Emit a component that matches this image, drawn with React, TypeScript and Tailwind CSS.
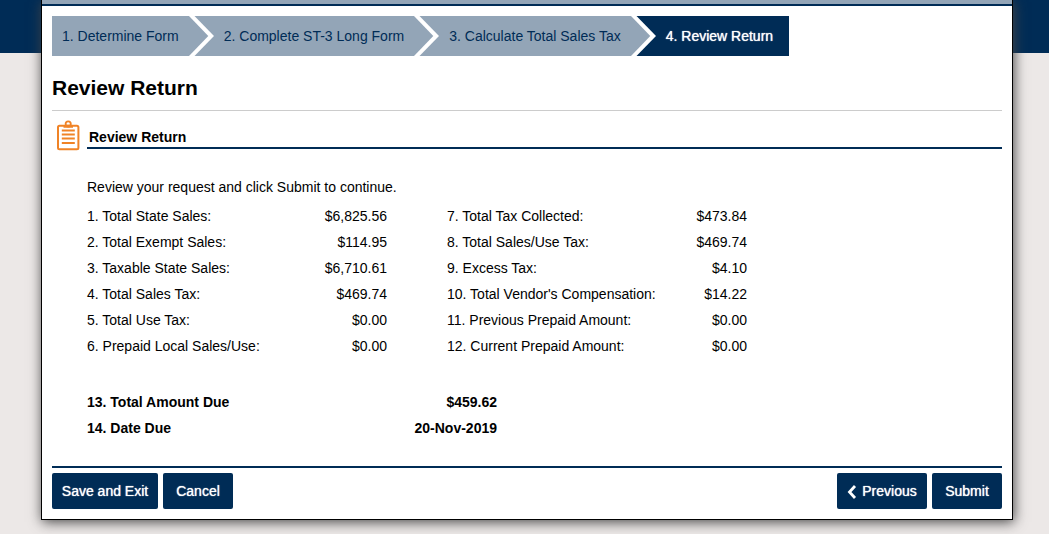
type Line = { label: string; value: string };

const steps = [
  "1. Determine Form",
  "2. Complete ST-3 Long Form",
  "3. Calculate Total Sales Tax",
  "4. Review Return",
];

const leftLines: Line[] = [
  { label: "1. Total State Sales:", value: "$6,825.56" },
  { label: "2. Total Exempt Sales:", value: "$114.95" },
  { label: "3. Taxable State Sales:", value: "$6,710.61" },
  { label: "4. Total Sales Tax:", value: "$469.74" },
  { label: "5. Total Use Tax:", value: "$0.00" },
  { label: "6. Prepaid Local Sales/Use:", value: "$0.00" },
];

const rightLines: Line[] = [
  { label: "7. Total Tax Collected:", value: "$473.84" },
  { label: "8. Total Sales/Use Tax:", value: "$469.74" },
  { label: "9. Excess Tax:", value: "$4.10" },
  { label: "10. Total Vendor's Compensation:", value: "$14.22" },
  { label: "11. Previous Prepaid Amount:", value: "$0.00" },
  { label: "12. Current Prepaid Amount:", value: "$0.00" },
];

const dueLines: Line[] = [
  { label: "13. Total Amount Due", value: "$459.62" },
  { label: "14. Date Due", value: "20-Nov-2019" },
];

const buttonClass =
  "flex h-9 items-center justify-center rounded-xs bg-[#002c56] text-white [text-shadow:0_0_1px_white] hover:cursor-pointer";

const StepArrow = ({ nextActive }: { nextActive: boolean }) => (
  <svg className="h-10 w-[25px]" viewBox="0 0 25 40" aria-hidden="true">
    <rect width="25" height="40" fill={nextActive ? "#002c56" : "#93a5b7"} />
    <path d="M0 0H5.5L25 20L5.5 40H0Z" fill="white" />
    <path d="M0 0L19.3 20L0 40Z" fill="#93a5b7" />
  </svg>
);

const ClipboardIcon = () => (
  <svg className="h-8 w-6" viewBox="0 0 24 32" fill="none" stroke="#f08326" aria-hidden="true">
    <rect x="2" y="6.7" width="20.4" height="23.5" rx="1.5" strokeWidth="2" />
    <circle cx="12.2" cy="4.9" r="2.6" strokeWidth="1.8" />
    <path d="M7.5 8.8V7Q8.5 5.8 10.5 5.8H14Q16 5.8 17 7V8.8Z" fill="#f08326" stroke="none" />
    <path d="M5.8 11.5H18.8M5.8 15.5H18.8M5.8 19.5H18.8M5.8 24H18.8" strokeWidth="1.9" />
  </svg>
);

const PreviousIcon = () => (
  <svg className="h-4 w-[10px]" viewBox="0 0 10 16" fill="none" aria-hidden="true">
    <path d="M8 3L2.5 9L8 15" stroke="white" strokeWidth="2.8" />
  </svg>
);

const LinesTable = ({ lines, className }: { lines: Line[]; className: string }) => (
  <table className={className}>
    <tbody>
      {lines.map((line) => (
        <tr key={line.label} className="h-[26px]">
          <th scope="row" className="text-left [font-weight:inherit]">
            {line.label}
          </th>
          <td className="text-right">{line.value}</td>
        </tr>
      ))}
    </tbody>
  </table>
);

const App = () => {
  return (
    <div className="min-h-screen bg-[#ece8e7] pb-[14px] font-['Liberation_Sans',Arial,sans-serif] text-sm text-black">
      <div className="h-[53px] bg-[#002c56]" />

      <main className="relative -mt-[53px] mr-9 ml-[41px] border border-t-0 border-black bg-white shadow-[1px_2px_12px_#444]">
        <div className="h-[6px] border-b-2 border-[#002c56] bg-[#93a5b7]" />

        <div className="p-[10px]">
          <ol className="flex">
            {steps.map((step, index) => {
              const active = index === steps.length - 1;
              return (
                <li key={step} className="flex" aria-current={active ? "step" : undefined}>
                  <span
                    className={
                      active
                        ? "flex h-10 items-center bg-[#002c56] pr-4 pl-[10px] text-white [text-shadow:0_0_1px_white]"
                        : "flex h-10 items-center bg-[#93a5b7] px-[10px] text-[#002c56]"
                    }
                  >
                    {step}
                  </span>
                  {!active && <StepArrow nextActive={index === steps.length - 2} />}
                </li>
              );
            })}
          </ol>

          <h1 className="mt-[17px] border-b border-[#cccccc] pb-[7px] text-[21px] leading-[30px] font-bold">
            Review Return
          </h1>

          <section>
            <div className="mt-2 flex items-start gap-[7px] pl-1">
              <ClipboardIcon />
              <h2 className="mt-2 flex-1 border-b-2 border-[#002c56] pl-[2px] leading-5 font-bold">
                Review Return
              </h2>
            </div>

            <div className="pt-[26px] pl-[35px]">
              <p className="mb-[6px]">Review your request and click Submit to continue.</p>
              <div className="flex gap-[60px]">
                <LinesTable lines={leftLines} className="w-[300px]" />
                <LinesTable lines={rightLines} className="w-[300px]" />
              </div>
              <LinesTable lines={dueLines} className="mt-[30px] w-[410px] font-bold" />
            </div>
          </section>

          <footer className="mt-[25px] flex justify-between border-t-2 border-[#002c56] pt-[5px]">
            <div className="flex gap-[5px]">
              <button className={`${buttonClass} w-[106px]`} type="button">
                Save and Exit
              </button>
              <button className={`${buttonClass} w-[70px]`} type="button">
                Cancel
              </button>
            </div>
            <div className="flex gap-[5px]">
              <button className={`${buttonClass} w-[90px] gap-[5px]`} type="button">
                <PreviousIcon />
                Previous
              </button>
              <button className={`${buttonClass} w-[70px]`} type="button">
                Submit
              </button>
            </div>
          </footer>
        </div>
      </main>
    </div>
  );
};

export default App;
